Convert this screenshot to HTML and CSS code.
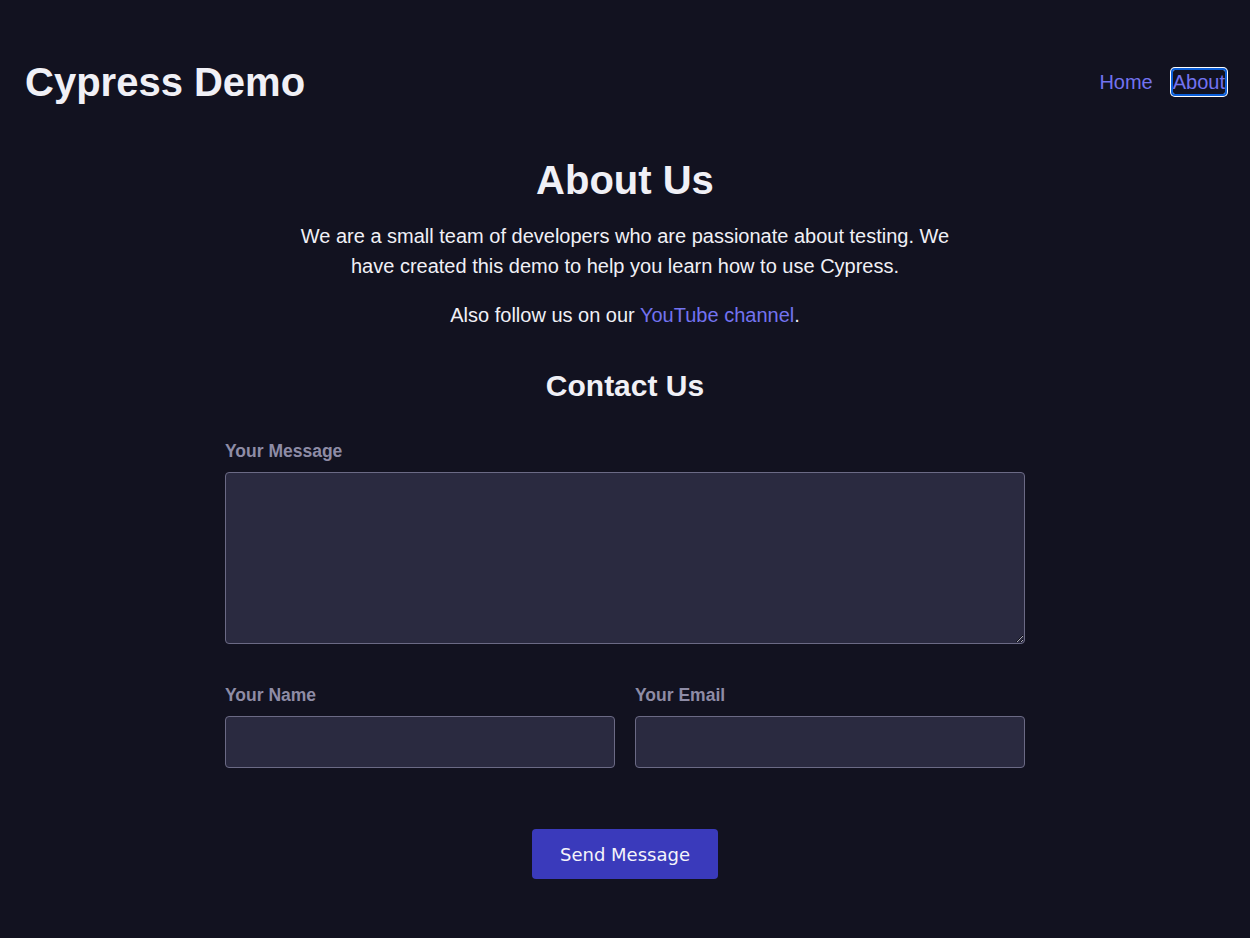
FILE: index.html
```html
<!DOCTYPE html>
<html lang="en">
<head>
<meta charset="utf-8">
<title>Cypress Demo - About</title>
<link rel="stylesheet" href="styles.css">
</head>
<body>
<header class="site-header">
  <div class="brand">Cypress Demo</div>
  <nav class="nav">
    <a href="#" class="nav-link">Home</a>
    <a href="#" class="nav-link nav-link-active">About</a>
  </nav>
</header>
<main class="content">
  <h1 class="page-title">About Us</h1>
  <p class="intro">We are a small team of developers who are passionate about testing. We have created this demo to help you learn how to use Cypress.</p>
  <p class="follow">Also follow us on our <a href="#" class="link">YouTube channel</a>.</p>
  <h2 class="section-title">Contact Us</h2>
  <form class="contact-form">
    <div class="field">
      <label class="field-label" for="msg">Your Message</label>
      <textarea id="msg" class="textarea"></textarea>
    </div>
    <div class="field-row">
      <div class="field">
        <label class="field-label" for="name">Your Name</label>
        <input id="name" class="input" type="text">
      </div>
      <div class="field">
        <label class="field-label" for="email">Your Email</label>
        <input id="email" class="input" type="email">
      </div>
    </div>
    <div class="actions">
      <button type="button" class="btn">Send Message</button>
    </div>
  </form>
</main>
</body>
</html>
```

FILE: styles.css
```css
* { box-sizing: border-box; }
html, body {
  margin: 0;
  padding: 0;
  background: #121220;
  color: #f0f0f6;
  font-family: "Liberation Sans", Arial, sans-serif;
}
body { min-height: 938px; }
.site-header {
  display: flex;
  justify-content: space-between;
  align-items: center;
  padding: 59px 25px 0 25px;
}
.brand {
  font-size: 40px;
  font-weight: 700;
  line-height: 46px;
}
.nav {
  display: flex;
  gap: 20px;
  align-items: center;
}
.nav-link {
  color: #7373f0;
  text-decoration: none;
  font-size: 20px;
  line-height: 24px;
}
.nav-link-active {
  outline: 2px solid #0b5ed7;
  box-shadow: 0 0 0 3px #ffffff;
  border-radius: 2px;
  outline-offset: 0;
}
.content {
  display: flex;
  flex-direction: column;
  align-items: center;
  padding-top: 52px;
}
.page-title {
  margin: 0;
  font-size: 40px;
  line-height: 46px;
  font-weight: 700;
}
.intro {
  margin: 18px 0 0;
  max-width: 670px;
  text-align: center;
  font-size: 20px;
  line-height: 30px;
}
.follow {
  margin: 19px 0 0;
  font-size: 20px;
  line-height: 30px;
  text-align: center;
}
.link { color: #7373f0; text-decoration: none; }
.section-title {
  margin: 38px 0 0;
  font-size: 30px;
  line-height: 36px;
  font-weight: 700;
}
.contact-form {
  width: 800px;
  margin-top: 36px;
  display: flex;
  flex-direction: column;
}
.field {
  display: flex;
  flex-direction: column;
  flex: 1;
}
.field-label {
  font-size: 17.5px;
  line-height: 22px;
  font-weight: 700;
  color: #8e8ca6;
  margin-bottom: 10px;
}
.textarea {
  height: 172px;
  background: #2a2a40;
  border: 1px solid #6b6a85;
  border-radius: 4px;
  color: #f0f0f6;
  font: inherit;
  padding: 8px;
}
.field-row {
  display: flex;
  gap: 20px;
  margin-top: 40px;
}
.input {
  height: 52px;
  background: #2a2a40;
  border: 1px solid #6b6a85;
  border-radius: 4px;
  color: #f0f0f6;
  font: inherit;
  padding: 0 12px;
}
.actions {
  display: flex;
  justify-content: center;
  margin-top: 61px;
}
.btn {
  width: 186px;
  height: 50px;
  background: #3a3abb;
  color: #f4f4fa;
  border: none;
  border-radius: 4px;
  font-family: "DejaVu Sans", sans-serif;
  font-size: 18px;
}
```
